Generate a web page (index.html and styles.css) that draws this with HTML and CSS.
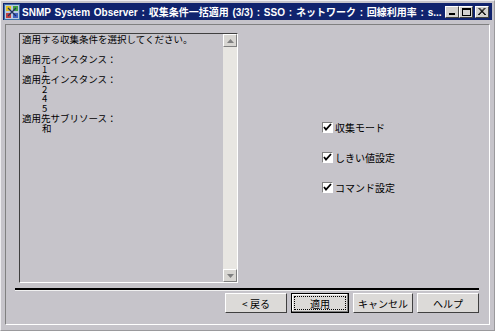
FILE: index.html
```html
<!DOCTYPE html>
<html lang="ja">
<head>
<meta charset="utf-8">
<link rel="stylesheet" href="styles.css">
</head>
<body>
<div class="window">
  <div class="titlebar">
    <svg class="appicon" width="16" height="16" viewBox="0 0 16 16">
      <rect x="0" y="0" width="16" height="16" fill="#3a6ea5"/>
      <rect x="1" y="1" width="14" height="14" fill="#b8c8e0"/>
      <rect x="2" y="2" width="5" height="5" fill="#e0c020"/>
      <rect x="9" y="2" width="5" height="5" fill="#40a040"/>
      <rect x="2" y="9" width="5" height="5" fill="#c04040"/>
      <rect x="9" y="9" width="5" height="5" fill="#4060c0"/>
      <path d="M4 4 L12 12 M12 4 L4 12" stroke="#203060" stroke-width="1.2"/>
    </svg>
    <span class="title">SNMP System Observer : 収集条件一括適用 (3/3) : SSO : ネットワーク : 回線利用率 : s...</span>
    <div class="tbtns">
      <span class="tbtn"><svg width="8" height="7" viewBox="0 0 8 7"><rect x="1" y="5" width="6" height="2" fill="#000"/></svg></span>
      <span class="tbtn"><svg width="9" height="8" viewBox="0 0 9 8"><rect x="0.5" y="0.5" width="8" height="7" fill="none" stroke="#000"/><rect x="0" y="0" width="9" height="2" fill="#000"/></svg></span>
      <span class="tbtn close"><svg width="8" height="7" viewBox="0 0 8 7"><path d="M0.5 0 L7 7 M7.5 0 L1 7 M1.5 0 L8 7 M6.5 0 L0 7" stroke="#000" stroke-width="0.9"/></svg></span>
    </div>
  </div>
  <div class="client">
    <div class="panel">
      <div class="main">
        <div class="listbox">
          <div class="listtext">
            <div>適用する収集条件を選択してください。</div>
            <div>&nbsp;</div>
            <div>適用元インスタンス：</div>
            <div class="ind">1</div>
            <div>適用先インスタンス：</div>
            <div class="ind">2</div>
            <div class="ind">4</div>
            <div class="ind">5</div>
            <div>適用先サブリソース：</div>
            <div class="ind">和</div>
          </div>
          <div class="vscroll">
            <span class="sbtn"><svg width="7" height="4" viewBox="0 0 7 4"><path d="M3.5 0 L7 4 L0 4 Z" fill="#808080"/></svg></span>
            <span class="strack"></span>
            <span class="sbtn"><svg width="7" height="4" viewBox="0 0 7 4"><path d="M0 0 L7 0 L3.5 4 Z" fill="#808080"/></svg></span>
          </div>
        </div>
        <div class="checks">
          <label class="chk"><span class="box"><svg width="9" height="9" viewBox="0 0 9 9"><path d="M1 4 L3 6.5 L8 1" stroke="#000" stroke-width="1.8" fill="none"/></svg></span>収集モード</label>
          <label class="chk"><span class="box"><svg width="9" height="9" viewBox="0 0 9 9"><path d="M1 4 L3 6.5 L8 1" stroke="#000" stroke-width="1.8" fill="none"/></svg></span>しきい値設定</label>
          <label class="chk"><span class="box"><svg width="9" height="9" viewBox="0 0 9 9"><path d="M1 4 L3 6.5 L8 1" stroke="#000" stroke-width="1.8" fill="none"/></svg></span>コマンド設定</label>
        </div>
      </div>
      <div class="sep"></div>
      <div class="buttons">
        <button class="btn back">&lt; 戻る</button>
        <button class="btn default apply"><span class="focus">適用</span></button>
        <button class="btn cancel">キャンセル</button>
        <button class="btn help">ヘルプ</button>
      </div>
    </div>
  </div>
</div>
</body>
</html>
```
FILE: styles.css
```css
html, body {
  margin: 0;
  padding: 0;
  background: #f4f3f6;
}
body {
  font-family: "Noto Sans CJK JP", "DejaVu Sans", sans-serif;
  font-size: 10px;
  color: #000;
}
.window {
  width: 495px;
  height: 331px;
  box-sizing: border-box;
  padding: 2px 2px 2px 2px;
  background: #c6c4ca;
  border: 1px solid #eeedf0;
  border-right-color: #9a999c;
  border-bottom-color: #9a999c;
  display: flex;
  flex-direction: column;
}
.titlebar {
  height: 17px;
  flex: none;
  background: #10236e;
  display: flex;
  align-items: center;
  padding: 0 3px 0 1px;
  color: #fff;
  overflow: hidden;
}
.appicon {
  flex: none;
  margin-right: 2px;
}
.title {
  font-family: "Liberation Sans", "Noto Sans CJK JP", sans-serif;
  font-weight: bold;
  font-size: 10px;
  word-spacing: 1px;
  white-space: nowrap;
  flex: 1;
  min-width: 0;
  overflow: hidden;
}
.tbtns {
  display: flex;
  flex: none;
}
.tbtn {
  width: 14px;
  height: 12px;
  box-sizing: border-box;
  background: #d4d2d0;
  border: 1px solid;
  border-color: #fff #404040 #404040 #fff;
  display: flex;
  align-items: center;
  justify-content: center;
}
.tbtn.close { margin-left: 2px; }
.client {
  flex: 1;
  padding: 4px 2px 3px 2px;
  display: flex;
}
.panel {
  flex: 1;
  border: 1px solid;
  border-color: #808080 #fff #fff #808080;
  display: flex;
  flex-direction: column;
  padding: 8px 10px 0 13px;
}
.main {
  height: 250px;
  flex: none;
  display: flex;
}
.listbox {
  width: 219px;
  height: 250px;
  box-sizing: border-box;
  border: 1px solid;
  border-color: #404040 #fff #fff #404040;
  display: flex;
  background: #c6c4ca;
}
.listtext {
  flex: 1;
  padding: 1px 0 0 2px;
  line-height: 9.9px;
  font-size: 9.5px;
  white-space: nowrap;
}
.listtext .ind {
  padding-left: 20px;
}
.vscroll {
  width: 14px;
  display: flex;
  flex-direction: column;
  background: #e8e6e2;
}
.sbtn {
  height: 13px;
  width: 14px;
  box-sizing: border-box;
  background: #d8d6d2;
  border: 1px solid;
  border-color: #fff #808080 #808080 #fff;
  display: flex;
  align-items: center;
  justify-content: center;
}
.strack { flex: 1; }
.checks {
  display: flex;
  flex-direction: column;
  padding: 89px 0 0 84px;
  gap: 19px;
}
.chk {
  display: flex;
  align-items: center;
  height: 11px;
  font-size: 10px;
  white-space: nowrap;
}
.box {
  width: 11px;
  height: 11px;
  box-sizing: border-box;
  background: #fff;
  border: 1px solid;
  border-color: #808080 #fff #fff #808080;
  display: flex;
  align-items: center;
  justify-content: center;
  margin-right: 2px;
}
.sep {
  height: 0;
  border-top: 2px solid #000;
  border-bottom: 1px solid #f0f0f0;
  margin: 5px 0 2px -4px;
}
.buttons {
  display: flex;
  justify-content: flex-end;
  gap: 4px;
}
.btn {
  width: 60px;
  height: 20px;
  font-family: "Noto Sans CJK JP", sans-serif;
  font-size: 10px;
  background: #dcdad8;
  border: 1px solid;
  border-color: #fff #404040 #404040 #fff;
  padding: 0;
  margin: 0;
  color: #000;
  display: flex;
  align-items: center;
  justify-content: center;
}
.btn.back { width: 62px; }
.btn.apply { width: 58px; }
.btn.cancel { width: 60px; }
.btn.help { width: 62px; }
.btn.default {
  border: 1px solid #000;
  box-shadow: inset -1px -1px 0 #808080, inset 1px 1px 0 #fff;
  align-items: stretch;
}
.focus {
  flex: 1;
  margin: 2px;
  border: 1px dotted #000;
  display: flex;
  align-items: center;
  justify-content: center;
}
```
